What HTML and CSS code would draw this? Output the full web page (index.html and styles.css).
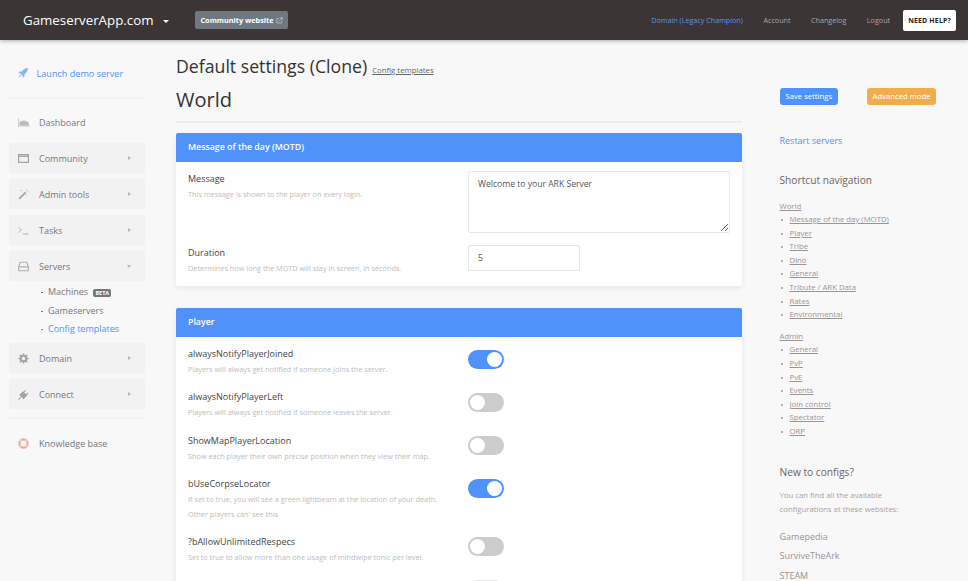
FILE: index.html
```html
<!DOCTYPE html>
<html lang="en">
<head>
    <meta charset="UTF-8">
    <meta name="viewport" content="width=device-width, initial-scale=1.0">
    <title>Default settings (Clone)</title>
    <link rel="stylesheet" href="styles.css">
</head>
<body>
    <header class="topbar">
        <a class="brand">GameserverApp.com</a>
        <span class="brand-caret"></span>
        <a class="community-btn">Community website
            <svg class="ext-icon" viewBox="0 0 10 10"><path d="M8 6v2.500H1.200V2.200H4M5.500 1H9v3.500M9 1 4.500 5.500" fill="none" stroke="currentColor" stroke-width="1"/></svg>
        </a>
        <nav class="topnav">
            <a class="active">Domain (Legacy Champion)</a>
            <a>Account</a>
            <a>Changelog</a>
            <a>Logout</a>
        </nav>
        <a class="help-btn">NEED HELP?</a>
    </header>

    <div class="layout">
        <aside class="sidebar">
            <a class="demo-link">
                <svg class="side-icon" viewBox="0 0 12 12"><path d="M12 0C8.500.2 6 1.800 4.400 4.200H2L.3 6.300l2.500.4 2.500 2.500.4 2.500 2.100-1.700V7.600C10.200 6 11.800 3.500 12 0zM2.500 8 .5 11.500 4 9.500z" fill="#8ab4f0"/></svg>
                Launch demo server
            </a>
            <a class="side-plain">
                <svg class="side-icon side-icon-wide" viewBox="0 0 13 10"><path d="M0 0h.8v9.200H13v.8H0z" fill="#c4c1c1"/><path d="M1.600 8.600V5l1.800-2.200L5 4l1.400-2 2 2.200 1.200-1 2.400 3v2.400z" fill="#bdbaba"/></svg>
                Dashboard
            </a>
            <a class="side-item">
                <svg class="side-icon" viewBox="0 0 11 9"><path d="M.6.600h9.800v7.800H.6z" fill="none" stroke="#a5a2a2" stroke-width="1.200"/><path d="M.6 2.200h9.800" stroke="#a5a2a2" stroke-width="1.400"/></svg>
                Community <span class="arrow-right"></span>
            </a>
            <a class="side-item">
                <svg class="side-icon" viewBox="0 0 11 11"><path d="M.5 9.300 7 2.800l1.200 1.200-6.500 6.500z" fill="#a5a2a2"/><path d="M8.500.2v1.800M9.300 2.800h1.700M2.500 1.500h2M8.300 5v1.600" stroke="#c9c6c6" stroke-width=".9"/></svg>
                Admin tools <span class="arrow-right"></span>
            </a>
            <a class="side-item">
                <svg class="side-icon" viewBox="0 0 11 8"><path d="M.5 1 3.500 3.500.5 6" fill="none" stroke="#b0adad" stroke-width=".9"/><path d="M5 7.500h5.500" stroke="#b0adad"/></svg>
                Tasks <span class="arrow-right"></span>
            </a>
            <a class="side-item">
                <svg class="side-icon" viewBox="0 0 10 9"><path d="M2 .6h6L9.400 4.500v3.900H.6V4.500zM.6 4.800h8.800" fill="none" stroke="#b0adad" stroke-width="1"/></svg>
                Servers <span class="arrow-down"></span>
            </a>
            <ul class="side-sub">
                <li>Machines <span class="beta">BETA</span></li>
                <li>Gameservers</li>
                <li class="active">Config templates</li>
            </ul>
            <a class="side-item">
                <svg class="side-icon" viewBox="0 0 14 14"><circle cx="7" cy="7" r="3.600" fill="none" stroke="#a5a2a2" stroke-width="2.600"/><path d="M7 .5v2.500M7 11v2.500M.5 7H3M11 7h2.500M2.400 2.400l1.800 1.800M9.800 9.800l1.800 1.800M2.400 11.600l1.800-1.800M9.800 4.200l1.800-1.800" stroke="#a5a2a2" stroke-width="2"/></svg>
                Domain <span class="arrow-right"></span>
            </a>
            <a class="side-item">
                <svg class="side-icon" viewBox="0 0 11 11"><path d="M.5 10.500 2.600 8.400" stroke="#a5a2a2" stroke-width="1.200"/><path d="M2 6l3-3 3.500 3.500-3 3zM5.500 3.500 7.500 1.300M8 6l2.200-2" fill="#a5a2a2" stroke="#a5a2a2" stroke-width="1.100"/></svg>
                Connect <span class="arrow-right"></span>
            </a>
            <a class="side-plain side-kb">
                <svg class="side-icon" viewBox="0 0 14 14"><circle cx="7" cy="7" r="5.200" fill="none" stroke="#f3a899" stroke-width="2.800"/><path d="M3 3l2.300 2.300M8.700 8.700 11 11M3 11l2.300-2.300M8.700 5.300 11 3" stroke="#fdeeea" stroke-width="1.500"/></svg>
                Knowledge base
            </a>
        </aside>

        <main class="content">
            <div class="page-title">
                <h1>Default settings (Clone)</h1>
                <a class="crumb">Config templates</a>
            </div>
            <h2 class="section-title">World</h2>

            <section class="card">
                <h3 class="card-head">Message of the day (MOTD)</h3>
                <div class="card-body">
                    <div class="row row-message">
                        <div class="row-text">
                            <div class="row-label">Message</div>
                            <p class="row-help">This message is shown to the player on every login.</p>
                        </div>
                        <textarea class="field field-area">Welcome to your ARK Server</textarea>
                    </div>
                    <div class="row row-duration">
                        <div class="row-text">
                            <div class="row-label">Duration</div>
                            <p class="row-help">Determines how long the MOTD will stay in screen, in seconds.</p>
                        </div>
                        <input class="field field-num" type="text" value="5">
                    </div>
                </div>
            </section>

            <section class="card">
                <h3 class="card-head">Player</h3>
                <div class="card-body">
                    <div class="row">
                        <div class="row-text">
                            <div class="row-label">alwaysNotifyPlayerJoined</div>
                            <p class="row-help">Players will always get notified if someone joins the server.</p>
                        </div>
                        <span class="toggle on"></span>
                    </div>
                    <div class="row">
                        <div class="row-text">
                            <div class="row-label">alwaysNotifyPlayerLeft</div>
                            <p class="row-help">Players will always get notified if someone leaves the server.</p>
                        </div>
                        <span class="toggle"></span>
                    </div>
                    <div class="row">
                        <div class="row-text">
                            <div class="row-label">ShowMapPlayerLocation</div>
                            <p class="row-help">Show each player their own precise position when they view their map.</p>
                        </div>
                        <span class="toggle"></span>
                    </div>
                    <div class="row">
                        <div class="row-text">
                            <div class="row-label">bUseCorpseLocator</div>
                            <p class="row-help">If set to true, you will see a green lightbeam at the location of your death.</p>
                            <p class="row-help">Other players can' see this</p>
                        </div>
                        <span class="toggle on"></span>
                    </div>
                    <div class="row">
                        <div class="row-text">
                            <div class="row-label">?bAllowUnlimitedRespecs</div>
                            <p class="row-help">Set to true to allow more than one usage of mindwipe tonic per level.</p>
                        </div>
                        <span class="toggle"></span>
                    </div>
                    <div class="row">
                        <div class="row-text"></div>
                        <span class="toggle toggle-faint"></span>
                    </div>
                </div>
            </section>
        </main>

        <aside class="rightbar">
            <div class="actions">
                <a class="btn btn-blue">Save settings</a>
                <a class="btn btn-orange">Advanced mode</a>
            </div>
            <a class="restart">Restart servers</a>
            <h4 class="right-title">Shortcut navigation</h4>
            <a class="short-head">World</a>
            <ul class="short-list">
                <li><a>Message of the day (MOTD)</a></li>
                <li><a>Player</a></li>
                <li><a>Tribe</a></li>
                <li><a>Dino</a></li>
                <li><a>General</a></li>
                <li><a>Tribute / ARK Data</a></li>
                <li><a>Rates</a></li>
                <li><a>Environmental</a></li>
            </ul>
            <a class="short-head">Admin</a>
            <ul class="short-list">
                <li><a>General</a></li>
                <li><a>PvP</a></li>
                <li><a>PvE</a></li>
                <li><a>Events</a></li>
                <li><a>Join control</a></li>
                <li><a>Spectator</a></li>
                <li><a>ORP</a></li>
            </ul>
            <h4 class="right-title right-new">New to configs?</h4>
            <p class="right-text">You can find all the available configurations at these websites:</p>
            <a class="ext-link">Gamepedia</a>
            <a class="ext-link">SurviveTheArk</a>
            <a class="ext-link">STEAM</a>
        </aside>
    </div>
</body>
</html>
```

FILE: styles.css
```css
* {
    margin: 0;
    padding: 0;
    box-sizing: border-box;
}
html, body {
    height: 581px;
    overflow: hidden;
}
body {
    font-family: "Open Sans", sans-serif;
    background-color: #f8f8f9;
    color: #444;
}

/* top bar */
.topbar {
    display: flex;
    align-items: center;
    height: 40px;
    padding: 0 12px 0 23px;
    background-color: #3b3535;
    box-shadow: 0 1px 4px rgba(0, 0, 0, 0.3);
    position: relative;
}
.brand {
    font-size: 13.300px;
    color: #fff;
}
.brand-caret {
    margin: 2px 0 0 10px;
    border-top: 3px solid #fff;
    border-left: 3px solid transparent;
    border-right: 3px solid transparent;
}
.community-btn {
    display: flex;
    align-items: center;
    gap: 2px;
    height: 18px;
    margin-left: 26px;
    padding: 0 5px;
    background-color: #6f7880;
    border-radius: 2px;
    color: #fff;
    font-size: 7.300px;
    font-weight: 700;
}
.ext-icon {
    width: 7px;
    height: 7px;
    color: #ccc;
}
.topnav {
    display: flex;
    gap: 20.500px;
    margin-left: auto;
    font-size: 7.200px;
    color: #aaa6a6;
}
.topnav .active {
    color: #5b93ee;
}
.help-btn {
    display: flex;
    align-items: center;
    height: 21px;
    margin-left: 13px;
    padding: 0 5px;
    background-color: #fff;
    border-radius: 2px;
    color: #222;
    font-size: 6.900px;
    font-weight: 700;
    letter-spacing: 0.2px;
}

/* layout */
.layout {
    display: grid;
    grid-template-columns: 176px 566px 226px;
}

/* left menu */
.sidebar {
    padding: 0 15px 0 9px;
    font-size: 9px;
    color: #777;
}
.side-icon {
    width: 11px;
    height: 11px;
    margin-right: 10px;
    flex-shrink: 0;
}
.side-icon-wide {
    width: 12px;
    margin-right: 9px;
}
.demo-link {
    display: flex;
    align-items: center;
    width: 136px;
    height: 59px;
    padding: 8px 0 0 9px;
    border-bottom: 1px solid #f0efef;
    color: #4f92fc;
    font-size: 9.100px;
}
.demo-link .side-icon {
    width: 10px;
    height: 10px;
    margin-right: 8.500px;
}
.side-plain {
    display: flex;
    align-items: center;
    width: 136px;
    height: 44px;
    padding: 2px 0 0 9px;
}
.side-item {
    display: flex;
    align-items: center;
    width: 136px;
    height: 30px;
    margin-bottom: 6px;
    padding: 0 14px 0 9px;
    background-color: #f3f2f3;
    border-radius: 2px;
}
.arrow-right {
    margin-left: auto;
    border-left: 3px solid #b9b6b6;
    border-top: 2.500px solid transparent;
    border-bottom: 2.500px solid transparent;
}
.arrow-down {
    margin-left: auto;
    border-top: 3px solid #b9b6b6;
    border-left: 2.500px solid transparent;
    border-right: 2.500px solid transparent;
}
.side-sub {
    list-style: none;
    margin: -4px 0 4px;
    padding-left: 30px;
}
.side-sub li {
    position: relative;
    height: 18.700px;
    line-height: 18.700px;
    padding-left: 9px;
}
.side-sub li::before {
    content: "";
    position: absolute;
    left: 2px;
    top: 9px;
    width: 2px;
    height: 1px;
    background-color: #777;
}
.side-sub .active {
    color: #4f92fc;
}
.side-sub .active::before {
    background-color: #4f92fc;
}
.beta {
    margin-left: 3px;
    padding: 0 2px;
    background-color: #6f7880;
    border-radius: 2px;
    color: #fff;
    font-size: 5.500px;
    font-weight: 700;
}
.side-kb {
    height: 49px;
    margin-top: 9px;
    padding-top: 0;
    border-top: 1px solid #f0efef;
}

/* main column */
.content {
    padding-top: 14px;
}
.page-title {
    display: flex;
    align-items: baseline;
    gap: 5px;
}
.page-title h1 {
    font-size: 17.700px;
    line-height: 25px;
    font-weight: 400;
    color: #333;
}
.crumb {
    font-size: 7.800px;
    color: #666;
    text-decoration: underline;
}
.section-title {
    margin-top: 6.500px;
    padding-bottom: 8.500px;
    border-bottom: 2px solid #eeeded;
    font-size: 20px;
    line-height: 27px;
    font-weight: 400;
    color: #333;
}
.card {
    margin-top: 10px;
    margin-bottom: 22px;
    background-color: #fff;
    border-radius: 2px;
    box-shadow: 0 2px 5px rgba(60, 80, 120, 0.1);
}
.card-head {
    height: 29px;
    line-height: 29px;
    padding-left: 12px;
    background-color: #4f92fc;
    border-radius: 2px 2px 0 0;
    color: #fff;
    font-size: 8.800px;
    font-weight: 600;
}
.card-body {
    padding: 9px 12px 0;
}
.row {
    display: flex;
    min-height: 43.300px;
}
.row-text {
    flex: 0 0 280px;
    padding-bottom: 10.800px;
}
.row-label {
    font-size: 9px;
    line-height: 16px;
    color: #444;
}
.row-help {
    font-size: 7.330px;
    line-height: 15.500px;
    color: #bdbdbd;
}
.field {
    display: block;
    border: 1px solid #e6e6e6;
    border-radius: 2px;
    background-color: #fff;
    font-family: "Open Sans", sans-serif;
    font-size: 8.600px;
    color: #555;
}
.field-area {
    width: 262px;
    height: 62px;
    padding: 6px 9px;
}
.field-num {
    width: 112px;
    height: 26px;
    padding: 0 9px;
}
.row-message {
    height: 74px;
}
.row-duration {
    min-height: 0;
    height: 41px;
}
.toggle {
    position: relative;
    display: block;
    flex-shrink: 0;
    width: 35.500px;
    height: 19px;
    margin-top: 3.500px;
    border-radius: 10px;
    background-color: #ccc;
}
.toggle::after {
    content: "";
    position: absolute;
    top: 2px;
    left: 2px;
    width: 15px;
    height: 15px;
    border-radius: 50%;
    background-color: #fff;
}
.toggle.on {
    background-color: #4f92fc;
}
.toggle.on::after {
    left: 18.500px;
}
.toggle-faint {
    background-color: #e4e4e4;
}

/* right column */
.rightbar {
    padding: 48px 0 0 37.500px;
    font-size: 7.770px;
    color: #9c9494;
}
.actions {
    display: flex;
    gap: 28.500px;
}
.btn {
    display: block;
    height: 17px;
    line-height: 17px;
    padding: 0 6px;
    border-radius: 3px;
    color: #fff;
    font-size: 7.700px;
}
.btn-blue {
    background-color: #4f92fc;
}
.btn-orange {
    background-color: #f0ad4e;
}
.restart {
    display: block;
    margin-top: 29px;
    color: #4f92fc;
    font-size: 9px;
}
.right-title {
    margin-top: 26px;
    margin-bottom: 12.500px;
    font-size: 10.200px;
    font-weight: 400;
    color: #6e6565;
}
.short-head {
    display: block;
    line-height: 13.600px;
    text-decoration: underline;
}
.short-list {
    padding-left: 10px;
    margin-bottom: 8px;
    list-style: none;
}
.short-list li {
    position: relative;
    line-height: 13.600px;
    text-decoration: underline;
}
.short-list li::before {
    content: "";
    position: absolute;
    left: -9px;
    top: 6px;
    width: 2px;
    height: 2px;
    border-radius: 50%;
    background-color: #9c9494;
}
.right-new {
    margin-top: 26.500px;
    margin-bottom: 10px;
}
.right-text {
    max-width: 125px;
    line-height: 13.600px;
    margin-bottom: 11px;
    color: #aaa3a3;
}
.ext-link {
    display: block;
    height: 19.200px;
    line-height: 19.200px;
    font-size: 9px;
}
```
